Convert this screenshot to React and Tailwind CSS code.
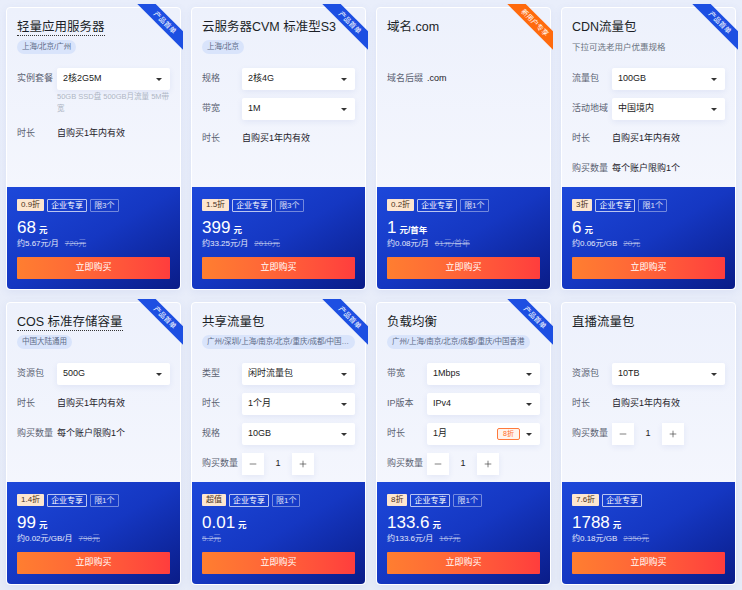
import React from 'react';
import { Minus, Plus } from 'lucide-react';

const cards = [
  {
    title: '轻量应用服务器',
    dotted: true,
    tag: '上海/北京/广州',
    ribbon: '产品首单',
    rows: [
      { label: '实例套餐', select: '2核2G5M', hint: '50GB SSD盘 500GB月流量 5M带宽' },
      { label: '时长', text: '自购买1年内有效' },
    ],
    badges: ['0.9折', '企业专享', '限3个'],
    price: '68',
    unit: '元',
    per: '约5.67元/月',
    origin: '720元',
  },
  {
    title: '云服务器CVM 标准型S3',
    tag: '上海/北京',
    ribbon: '产品首单',
    rows: [
      { label: '规格', select: '2核4G' },
      { label: '带宽', select: '1M' },
      { label: '时长', text: '自购买1年内有效' },
    ],
    badges: ['1.5折', '企业专享', '限3个'],
    price: '399',
    unit: '元',
    per: '约33.25元/月',
    origin: '2610元',
  },
  {
    title: '域名.com',
    ribbon: '新用户专享',
    orange: true,
    rows: [{ label: '域名后缀', text: '.com' }],
    badges: ['0.2折', '企业专享', '限1个'],
    price: '1',
    unit: '元/首年',
    per: '约0.08元/月',
    origin: '61元/首年',
  },
  {
    title: 'CDN流量包',
    sub: '下拉可选老用户优惠规格',
    ribbon: '产品首单',
    rows: [
      { label: '流量包', select: '100GB' },
      { label: '活动地域', select: '中国境内' },
      { label: '时长', text: '自购买1年内有效' },
      { label: '购买数量', text: '每个账户限购1个' },
    ],
    badges: ['3折', '企业专享', '限1个'],
    price: '6',
    unit: '元',
    per: '约0.06元/GB',
    origin: '20元',
  },
  {
    title: 'COS 标准存储容量',
    dotted: true,
    tag: '中国大陆通用',
    ribbon: '产品首单',
    rows: [
      { label: '资源包', select: '500G' },
      { label: '时长', text: '自购买1年内有效' },
      { label: '购买数量', text: '每个账户限购1个' },
    ],
    badges: ['1.4折', '企业专享', '限1个'],
    price: '99',
    unit: '元',
    per: '约0.02元/GB/月',
    origin: '798元',
  },
  {
    title: '共享流量包',
    tag: '广州/深圳/上海/南京/北京/重庆/成都/中国香港',
    ribbon: '产品首单',
    rows: [
      { label: '类型', select: '闲时流量包' },
      { label: '时长', select: '1个月' },
      { label: '规格', select: '10GB' },
      { label: '购买数量', stepper: true },
    ],
    badges: ['超值', '企业专享', '限1个'],
    price: '0.01',
    unit: '元',
    per: '',
    origin: '5.2元',
  },
  {
    title: '负载均衡',
    tag: '广州/上海/南京/北京/成都/重庆/中国香港',
    ribbon: '产品首单',
    rows: [
      { label: '带宽', select: '1Mbps' },
      { label: 'IP版本', select: 'IPv4' },
      { label: '时长', select: '1月', off: '8折' },
      { label: '购买数量', stepper: true },
    ],
    badges: ['8折', '企业专享', '限1个'],
    price: '133.6',
    unit: '元',
    per: '约133.6元/月',
    origin: '167元',
  },
  {
    title: '直播流量包',
    rows: [
      { label: '资源包', select: '10TB' },
      { label: '时长', text: '自购买1年内有效' },
      { label: '购买数量', stepper: true },
    ],
    badges: ['7.6折', '企业专享'],
    price: '1788',
    unit: '元',
    per: '约0.18元/GB',
    origin: '2350元',
  },
];

function Ribbon({ text, orange }) {
  return (
    <div className="pointer-events-none absolute -right-[3px] -top-[4px] h-[48px] w-[48px] overflow-hidden">
      <div
        className={
          orange
            ? 'absolute left-[-6px] top-[12px] flex h-[13px] w-[72px] rotate-45 items-center justify-center bg-[#ff6a0d] text-[7px] leading-none text-white'
            : 'absolute left-[-6px] top-[12px] flex h-[13px] w-[72px] rotate-45 items-center justify-center bg-[#1d4fe2] text-[7px] leading-none text-white'
        }
      >
        {text}
      </div>
    </div>
  );
}

function Select({ value, off }) {
  return (
    <div className="flex h-[22px] w-[115px] items-center rounded-[2px] bg-white pl-[6px] pr-[8px] text-[9px] text-[#222] shadow-[0_2px_6px_rgba(40,70,160,0.08)]">
      <span className="flex-1 truncate">{value}</span>
      {off && (
        <span className="mr-[6px] rounded-[2px] border border-[#ff7a3c] bg-[#fff3ec] px-[5px] text-[7px] leading-[10px] text-[#ff6a1f]">
          {off}
        </span>
      )}
      <span className="h-0 w-0 border-x-[3px] border-t-[3px] border-x-transparent border-t-[#333]" />
    </div>
  );
}

function Stepper() {
  return (
    <div className="flex items-center text-[9px] text-[#222]">
      <span className="flex h-[22px] w-[22px] items-center justify-center bg-white shadow-[0_2px_6px_rgba(40,70,160,0.08)]">
        <Minus size={10} strokeWidth={1.5} color="#333" />
      </span>
      <span className="w-[28px] text-center">1</span>
      <span className="flex h-[22px] w-[22px] items-center justify-center bg-white shadow-[0_2px_6px_rgba(40,70,160,0.08)]">
        <Plus size={10} strokeWidth={1.5} color="#333" />
      </span>
    </div>
  );
}

function Badge({ text, index }) {
  if (index === 0) {
    return (
      <span className="rounded-[1px] bg-[#fde6cf] px-[4px] text-[8px] leading-[12px] text-[#4a3322]">
        {text}
      </span>
    );
  }
  return (
    <span
      className={
        index === 1
          ? 'rounded-[1px] border border-white/70 px-[3px] text-[8px] leading-[11px] text-white'
          : 'rounded-[1px] border border-white/40 px-[3px] text-[8px] leading-[11px] text-white/85'
      }
    >
      {text}
    </span>
  );
}

function Card({ card }) {
  return (
    <div className="relative flex h-[283px] flex-col rounded-[4px] border border-white bg-gradient-to-b from-[#edf1fc] to-[#f8f9fe] shadow-[0_2px_8px_rgba(60,90,180,0.08)]">
      {card.ribbon && <Ribbon text={card.ribbon} orange={card.orange} />}

      <div className="flex-1 px-[10px] pt-[11px]">
        <div className="flex h-[17px]">
          <span
            className={
              card.dotted
                ? 'border-b border-dotted border-[#333] text-[12.5px] leading-[16px] text-[#1b1f27]'
                : 'text-[12.5px] leading-[16px] text-[#1b1f27]'
            }
          >
            {card.title}
          </span>
        </div>

        <div className="mt-[4px] flex h-[14px] items-center">
          {card.tag && (
            <span className="max-w-full truncate rounded-full bg-[#d9e4fb] px-[5px] text-[7.5px] leading-[14px] text-[#5c6a86]">
              {card.tag}
            </span>
          )}
          {card.sub && <span className="text-[8.5px] text-[#6b7280]">{card.sub}</span>}
        </div>

        <div className="mt-[14px] flex flex-col gap-[8px] text-[9px]">
          {card.rows.map((row) => (
            <div key={row.label}>
              <div className="flex h-[22px] items-center">
                <span className="w-[40px] shrink-0 whitespace-nowrap text-[#5b6272]">{row.label}</span>
                {row.select && <Select value={row.select} off={row.off} />}
                {row.text && <span className="text-[#1d2129]">{row.text}</span>}
                {row.stepper && <Stepper />}
              </div>
              {row.hint && (
                <div className="ml-[40px] mt-[1px] w-[116px] text-[7.5px] leading-[12px] text-[#aeb6c4]">
                  {row.hint}
                </div>
              )}
            </div>
          ))}
        </div>
      </div>

      <div className="h-[102px] rounded-b-[4px] bg-gradient-to-br from-[#1d48da] via-[#1537c2] to-[#0a1c88] px-[10px] pt-[11px]">
        <div className="flex h-[14px] items-center gap-[3px]">
          {card.badges.map((b, i) => (
            <Badge key={b} text={b} index={i} />
          ))}
        </div>
        <div className="mt-[6px] flex h-[20px] items-end text-white">
          <span className="text-[17px] leading-[20px]">{card.price}</span>
          <span className="mb-[2px] ml-[3px] text-[8.5px] font-bold leading-[12px]">{card.unit}</span>
        </div>
        <div className="flex h-[12px] items-center gap-[6px] text-[8px] leading-[12px]">
          {card.per && <span className="text-white/90">{card.per}</span>}
          <span className="text-white/50 line-through">{card.origin}</span>
        </div>
        <button className="mt-[7px] flex h-[22px] w-full items-center justify-center rounded-[1px] bg-gradient-to-r from-[#ff7e30] to-[#ff3d3d] text-[9px] text-white">
          立即购买
        </button>
      </div>
    </div>
  );
}

export default function App() {
  return (
    <div
      className="min-h-[590px] w-[742px] bg-gradient-to-b from-[#e9eefb] to-[#e7ecf8] px-[6px] pt-[7px]"
      style={{ fontFamily: '"Liberation Sans", "Noto Sans CJK SC", sans-serif' }}
    >
      <div className="grid grid-cols-4 gap-x-[10px] gap-y-[12px]">
        {cards.map((card) => (
          <Card key={card.title} card={card} />
        ))}
      </div>
    </div>
  );
}
